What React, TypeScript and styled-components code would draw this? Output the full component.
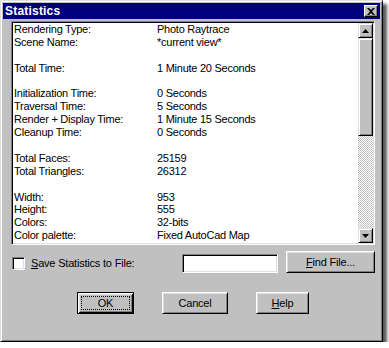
import React from "react";
import styled, { createGlobalStyle } from "styled-components";

const GlobalStyle = createGlobalStyle`
  body {
    margin: 0;
    background: #ffffff;
    font-family: "Liberation Sans", Arial, sans-serif;
  }
`;

const Window = styled.div`
  width: 383px;
  height: 342px;
  box-sizing: border-box;
  background: #c0c0c0;
  border-top: 1px solid #dfdfdf;
  border-left: 1px solid #dfdfdf;
  border-right: 1px solid #000;
  border-bottom: 1px solid #000;
  box-shadow: inset 1px 1px 0 #fff, inset -1px -1px 0 #808080,
    4px 4px 3px rgba(0, 0, 0, 0.65);
  padding: 2px;
  display: flex;
  flex-direction: column;
`;

const TitleBar = styled.div`
  height: 16px;
  background: #000080;
  display: flex;
  align-items: center;
  justify-content: space-between;
  padding: 0 2px 0 2px;
`;

const Title = styled.span`
  color: #fff;
  font-weight: bold;
  font-size: 12px;
  letter-spacing: 0.2px;
`;

const CloseBox = styled.div`
  width: 14px;
  height: 12px;
  box-sizing: border-box;
  background: #c0c0c0;
  border-top: 1px solid #fff;
  border-left: 1px solid #fff;
  border-right: 1px solid #000;
  border-bottom: 1px solid #000;
  box-shadow: inset -1px -1px 0 #808080;
  display: flex;
  align-items: center;
  justify-content: center;
`;

const Body = styled.div`
  padding: 2px 0 0 8px;
  display: flex;
  flex-direction: column;
`;

const ListBox = styled.div`
  width: 364px;
  height: 224px;
  box-sizing: border-box;
  background: #fff;
  border-top: 1px solid #808080;
  border-left: 1px solid #808080;
  border-right: 1px solid #fff;
  border-bottom: 1px solid #fff;
  box-shadow: inset 1px 1px 0 #000, inset -1px -1px 0 #dfdfdf;
  padding: 1px 1px 1px 1px;
  display: flex;
`;

const Lines = styled.div`
  flex: 1;
  overflow: hidden;
  padding: 0 0 0 1px;
  display: grid;
  grid-template-columns: 143px auto;
  grid-auto-rows: 12.9px;
  align-content: start;
  font-size: 11px;
  letter-spacing: -0.25px;
  line-height: 13px;
  color: #000;
  white-space: nowrap;
`;

const Scrollbar = styled.div`
  width: 15px;
  display: flex;
  flex-direction: column;
  background: repeating-conic-gradient(#c0c0c0 0 25%, #fff 0 50%) 0 0 / 2px 2px;
`;

const Raised = styled.div<{ $h: number }>`
  height: ${(p) => p.$h}px;
  box-sizing: border-box;
  background: #c0c0c0;
  border-top: 1px solid #dfdfdf;
  border-left: 1px solid #dfdfdf;
  border-right: 1px solid #000;
  border-bottom: 1px solid #000;
  box-shadow: inset 1px 1px 0 #fff, inset -1px -1px 0 #808080;
  display: flex;
  align-items: center;
  justify-content: center;
`;

const Track = styled.div`
  flex: 1;
`;

const OptionsRow = styled.div`
  margin-top: 6px;
  height: 22px;
  display: flex;
  align-items: center;
`;

const Check = styled.div`
  width: 13px;
  height: 13px;
  box-sizing: border-box;
  margin: 2px 6px 0 1px;
  background: #fff;
  border-top: 1px solid #808080;
  border-left: 1px solid #808080;
  border-right: 1px solid #fff;
  border-bottom: 1px solid #fff;
  box-shadow: inset 1px 1px 0 #000, inset -1px -1px 0 #dfdfdf;
`;

const Label = styled.span`
  font-size: 11px;
  letter-spacing: -0.2px;
  width: 151px;
  padding-top: 1px;
`;

const Field = styled.div`
  width: 96px;
  height: 19px;
  box-sizing: border-box;
  margin: 3px 8px 0 0;
  background: #fff;
  border-top: 1px solid #808080;
  border-left: 1px solid #808080;
  border-right: 1px solid #fff;
  border-bottom: 1px solid #fff;
  box-shadow: inset 1px 1px 0 #000, inset -1px -1px 0 #dfdfdf;
`;

const Button = styled.div<{ $w: number; $default?: boolean }>`
  width: ${(p) => p.$w}px;
  height: 22px;
  box-sizing: border-box;
  background: #c0c0c0;
  font-size: 11px;
  letter-spacing: -0.2px;
  color: #000;
  display: flex;
  align-items: center;
  justify-content: center;
  ${(p) =>
    p.$default
      ? `border: 1px solid #000;
         box-shadow: inset 1px 1px 0 #fff, inset -1px -1px 0 #000, inset 2px 2px 0 #dfdfdf, inset -2px -2px 0 #808080;
         padding: 3px;`
      : `border-top: 1px solid #fff;
         border-left: 1px solid #fff;
         border-right: 1px solid #000;
         border-bottom: 1px solid #000;
         box-shadow: inset 1px 1px 0 #dfdfdf, inset -1px -1px 0 #808080;`}
`;

const Focus = styled.div`
  flex: 1;
  align-self: stretch;
  border: 1px dotted #000;
  display: flex;
  align-items: center;
  justify-content: center;
`;

const ButtonRow = styled.div`
  margin-top: 19px;
  display: flex;
  padding-left: 66px;
  gap: 28px;
`;

const rows: [string, string][] = [
  ["Rendering Type:", "Photo Raytrace"],
  ["Scene Name:", "*current view*"],
  ["", ""],
  ["Total Time:", "1 Minute 20 Seconds"],
  ["", ""],
  ["Initialization Time:", "0 Seconds"],
  ["Traversal Time:", "5 Seconds"],
  ["Render + Display Time:", "1 Minute 15 Seconds"],
  ["Cleanup Time:", "0 Seconds"],
  ["", ""],
  ["Total Faces:", "25159"],
  ["Total Triangles:", "26312"],
  ["", ""],
  ["Width:", "953"],
  ["Height:", "555"],
  ["Colors:", "32-bits"],
  ["Color palette:", "Fixed AutoCad Map"],
];

const Arrow = ({ up }: { up?: boolean }) => (
  <svg width="7" height="4" viewBox="0 0 7 4">
    <polygon points={up ? "3.5,0 7,4 0,4" : "0,0 7,0 3.5,4"} fill="#000" />
  </svg>
);

export default function App() {
  return (
    <>
      <GlobalStyle />
      <Window>
        <TitleBar>
          <Title>Statistics</Title>
          <CloseBox>
            <svg width="8" height="7" viewBox="0 0 8 7">
              <path d="M0 0h2l2 2 2-2h2L5 3.5 8 7H6L4 5 2 7H0l3-3.5z" fill="#000" />
            </svg>
          </CloseBox>
        </TitleBar>
        <Body>
          <ListBox>
            <Lines>
              {rows.map(([k, v], i) => (
                <React.Fragment key={i}>
                  <span>{k}</span>
                  <span>{v}</span>
                </React.Fragment>
              ))}
            </Lines>
            <Scrollbar>
              <Raised $h={15}>
                <Arrow up />
              </Raised>
              <Raised $h={98} />
              <Track />
              <Raised $h={15}>
                <Arrow />
              </Raised>
            </Scrollbar>
          </ListBox>
          <OptionsRow>
            <Check />
            <Label>
              <u>S</u>ave Statistics to File:
            </Label>
            <Field />
            <Button $w={89}>
              <span>
                <u>F</u>ind File...
              </span>
            </Button>
          </OptionsRow>
          <ButtonRow>
            <Button $w={57} $default>
              <Focus>OK</Focus>
            </Button>
            <Button $w={66}>Cancel</Button>
            <Button $w={53}>
              <span>
                <u>H</u>elp
              </span>
            </Button>
          </ButtonRow>
        </Body>
      </Window>
    </>
  );
}
